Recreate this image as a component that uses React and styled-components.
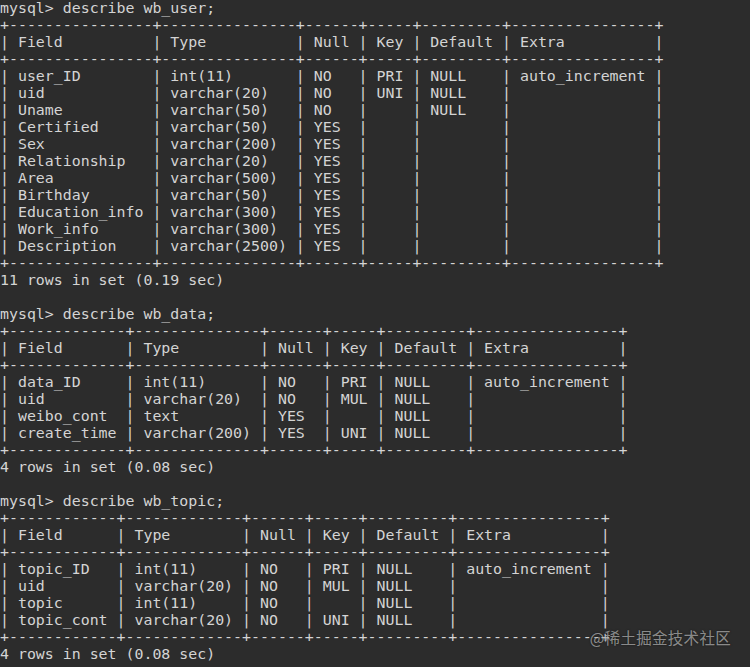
import React from "react";
import styled, { createGlobalStyle } from "styled-components";

const Global = createGlobalStyle`
  html, body {
    margin: 0;
    padding: 0;
    background: #2c2c2c;
  }
`;

const Terminal = styled.div`
  position: relative;
  width: 750px;
  height: 667px;
  overflow: hidden;
  background: #2c2c2c;
`;

const Screen = styled.pre`
  margin: 0;
  padding: 0;
  font-family: "DejaVu Sans Mono", "Liberation Mono", monospace;
  font-size: 14.9px;
  line-height: 17px;
  color: #d4d4d4;
  white-space: pre;
`;

const Watermark = styled.div`
  position: absolute;
  right: 19px;
  bottom: 19px;
  font-family: "Noto Sans CJK SC", "Noto Sans", sans-serif;
  font-size: 15.5px;
  letter-spacing: 0.3px;
  color: rgba(235, 235, 235, 0.55);
  text-shadow: 0 0 2px rgba(0, 0, 0, 0.6);
`;

// builds a mysql style result table
const table = (head, rows) => {
  const widths = head.map((h, i) =>
    Math.max(h.length, ...rows.map((r) => r[i].length))
  );
  const border = "+" + widths.map((w) => "-".repeat(w + 2)).join("+") + "+";
  const line = (cells) =>
    "|" + cells.map((c, i) => " " + c.padEnd(widths[i]) + " ").join("|") + "|";
  return [border, line(head), border, ...rows.map(line), border];
};

const HEAD = ["Field", "Type", "Null", "Key", "Default", "Extra"];

const user = [
  ["user_ID", "int(11)", "NO", "PRI", "NULL", "auto_increment"],
  ["uid", "varchar(20)", "NO", "UNI", "NULL", ""],
  ["Uname", "varchar(50)", "NO", "", "NULL", ""],
  ["Certified", "varchar(50)", "YES", "", "", ""],
  ["Sex", "varchar(200)", "YES", "", "", ""],
  ["Relationship", "varchar(20)", "YES", "", "", ""],
  ["Area", "varchar(500)", "YES", "", "", ""],
  ["Birthday", "varchar(50)", "YES", "", "", ""],
  ["Education_info", "varchar(300)", "YES", "", "", ""],
  ["Work_info", "varchar(300)", "YES", "", "", ""],
  ["Description", "varchar(2500)", "YES", "", "", ""],
];

const data = [
  ["data_ID", "int(11)", "NO", "PRI", "NULL", "auto_increment"],
  ["uid", "varchar(20)", "NO", "MUL", "NULL", ""],
  ["weibo_cont", "text", "YES", "", "NULL", ""],
  ["create_time", "varchar(200)", "YES", "UNI", "NULL", ""],
];

const topic = [
  ["topic_ID", "int(11)", "NO", "PRI", "NULL", "auto_increment"],
  ["uid", "varchar(20)", "NO", "MUL", "NULL", ""],
  ["topic", "int(11)", "NO", "", "NULL", ""],
  ["topic_cont", "varchar(20)", "NO", "UNI", "NULL", ""],
];

const lines = [
  "mysql> describe wb_user;",
  ...table(HEAD, user),
  "11 rows in set (0.19 sec)",
  "",
  "mysql> describe wb_data;",
  ...table(HEAD, data),
  "4 rows in set (0.08 sec)",
  "",
  "mysql> describe wb_topic;",
  ...table(HEAD, topic),
  "4 rows in set (0.08 sec)",
];

export default function App() {
  return (
    <Terminal>
      <Global />
      <Screen>{lines.join("\n")}</Screen>
      <Watermark>@稀土掘金技术社区</Watermark>
    </Terminal>
  );
}
